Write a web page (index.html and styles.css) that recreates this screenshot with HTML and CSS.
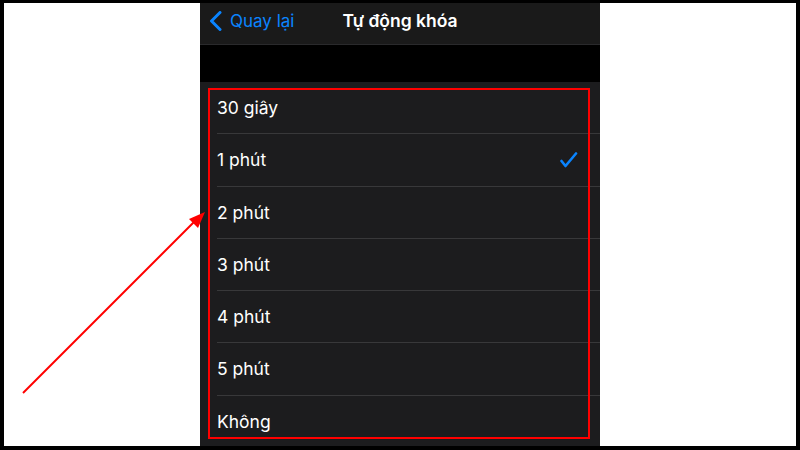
FILE: index.html
```html
<!DOCTYPE html>
<html lang="vi">
<head>
    <meta charset="UTF-8">
    <title>Tự động khóa</title>
    <link rel="stylesheet" href="styles.css">
</head>
<body>
    <div class="frame">
        <!-- Phone screenshot -->
        <div class="phone">
            <div class="nav">
                <div class="nav-back">
                    <svg class="chevron" width="13" height="20" viewBox="0 0 13 20">
                        <polyline points="11,1.5 2.5,10 11,18.5" fill="none" stroke="#0a84ff" stroke-width="3" stroke-linecap="round" stroke-linejoin="round"/>
                    </svg>
                    <span>Quay lại</span>
                </div>
                <div class="nav-title">Tự động khóa</div>
                <div></div>
            </div>
            <div class="spacer"></div>
            <ul class="options">
                <li class="option">30 giây</li>
                <li class="option">1 phút
                    <svg class="check" width="18" height="16" viewBox="0 0 18 16">
                        <polyline points="1.5,9 5.5,14 16,1.5" fill="none" stroke="#0a84ff" stroke-width="2.6" stroke-linecap="round" stroke-linejoin="round"/>
                    </svg>
                </li>
                <li class="option">2 phút</li>
                <li class="option">3 phút</li>
                <li class="option">4 phút</li>
                <li class="option">5 phút</li>
                <li class="option">Không</li>
            </ul>
        </div>

        <!-- Annotation overlays -->
        <div class="highlight"></div>
        <svg class="arrow" width="792" height="443" viewBox="4 3 792 443">
            <line x1="23" y1="393" x2="196" y2="220" stroke="#ff0000" stroke-width="2"/>
            <polygon points="205,212 198,228 189,219" fill="#ff0000"/>
        </svg>
    </div>
</body>
</html>
```

FILE: styles.css
```css
* {
    box-sizing: border-box;
    margin: 0;
    padding: 0;
}

body {
    font-family: Inter, "Noto Sans", sans-serif;
    background: #000;
}

/* Outer picture with thin black border */
.frame {
    position: relative;
    width: 800px;
    height: 450px;
    border-style: solid;
    border-color: #000;
    border-width: 3px 4px 4px 4px;
    background: #fff;
    display: flex;
    justify-content: center;
    overflow: hidden;
}

.phone {
    width: 400px;
    background: #1c1c1e;
    display: flex;
    flex-direction: column;
    overflow: hidden;
}

/* Navigation bar */
.nav {
    flex-shrink: 0;
    height: 42px;
    padding-bottom: 6px;
    background: #1a1a1a;
    border-bottom: 1px solid #2a2a2c;
    display: grid;
    grid-template-columns: 1fr auto 1fr;
    align-items: center;
}

.nav-back {
    display: flex;
    align-items: center;
    gap: 8px;
    padding-left: 9px;
    color: #0a84ff;
    font-size: 17px;
}

.nav-title {
    color: #fff;
    font-size: 17.5px;
    font-weight: 600;
}

.spacer {
    flex-shrink: 0;
    height: 37px;
    background: #000;
}

/* Option list */
.options {
    list-style: none;
}

.option {
    height: 52.25px;
    margin-left: 17px;
    padding-right: 22px;
    border-bottom: 1px solid #38383a;
    display: flex;
    align-items: center;
    justify-content: space-between;
    color: #fff;
    font-size: 17.5px;
}

.option:last-child {
    border-bottom: none;
}

/* Red annotation box */
.highlight {
    position: absolute;
    left: 204px;
    top: 85px;
    width: 382px;
    height: 351px;
    border: 2.5px solid #ff0000;
}

.arrow {
    position: absolute;
    left: 0;
    top: 0;
}
```
